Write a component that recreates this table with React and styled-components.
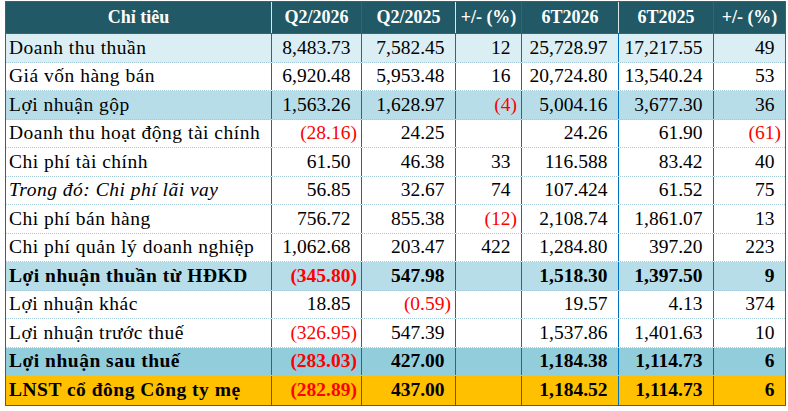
import React from "react";
import styled, { createGlobalStyle } from "styled-components";

const Global = createGlobalStyle`
  html, body { margin: 0; padding: 0; background: #ffffff; }
  body { font-family: "Liberation Serif", "Times New Roman", serif; }
`;

const COLS = "266px 90px 94px 66px 97px 95px 71px";
const BLUE = "#0070C0";

const Table = styled.div`
  margin: 1px 0 0 5px;
  width: fit-content;
  border: 1px solid ${BLUE};
`;

const HeadRow = styled.div`
  display: grid;
  grid-template-columns: ${COLS};
  height: 31px;
  background: #215967;
  border-bottom: 1px solid ${BLUE};
`;

const HeadCell = styled.div`
  display: flex;
  align-items: center;
  justify-content: center;
  color: #ffffff;
  font-weight: bold;
  font-size: 18px;
  border-right: 1px solid ${(p) => (p.$line === "blue" ? BLUE : "rgba(255,255,255,0.85)")};
  &:last-child { border-right: none; }
`;

const Row = styled.div`
  display: grid;
  grid-template-columns: ${COLS};
  box-sizing: border-box;
  height: 28.5px;
  background: ${(p) => p.$bg || "#ffffff"};
  border-bottom: 1px dotted #a3c8d8;
  font-size: 19.5px;
  font-weight: ${(p) => (p.$bold ? "bold" : "normal")};
  color: #000000;
  &:last-child { border-bottom: none; }
`;

const Label = styled.div`
  display: flex;
  align-items: center;
  padding-left: 3px;
  letter-spacing: 0.5px;
  white-space: nowrap;
  font-style: ${(p) => (p.$italic ? "italic" : "normal")};
  border-right: 1px solid ${BLUE};
`;

const Num = styled.div`
  display: flex;
  align-items: center;
  justify-content: flex-end;
  padding-right: 4px;
  white-space: nowrap;
  color: ${(p) => (p.$neg ? "#ff0000" : "#000000")};
  border-right: 1px solid ${BLUE};
  &:last-child { border-right: none; }
`;

const Pad = styled.span`
  visibility: hidden;
`;

const headers = [
  { t: "Chỉ tiêu", line: "white" },
  { t: "Q2/2026", line: "blue" },
  { t: "Q2/2025", line: "white" },
  { t: "+/- (%)", line: "blue" },
  { t: "6T2026", line: "white" },
  { t: "6T2025", line: "blue" },
  { t: "+/- (%)", line: "none" },
];

const rows = [
  { label: "Doanh thu thuần", bg: "#DAEEF3", v: ["8,483.73", "7,582.45", "12", "25,728.97", "17,217.55", "49"] },
  { label: "Giá vốn hàng bán", v: ["6,920.48", "5,953.48", "16", "20,724.80", "13,540.24", "53"] },
  { label: "Lợi nhuận gộp", bg: "#B7DEE8", v: ["1,563.26", "1,628.97", "(4)", "5,004.16", "3,677.30", "36"] },
  { label: "Doanh thu hoạt động tài chính", v: ["(28.16)", "24.25", "", "24.26", "61.90", "(61)"] },
  { label: "Chi phí tài chính", v: ["61.50", "46.38", "33", "116.588", "83.42", "40"] },
  { label: "Trong đó: Chi phí lãi vay", italic: true, v: ["56.85", "32.67", "74", "107.424", "61.52", "75"] },
  { label: "Chi phí bán hàng", v: ["756.72", "855.38", "(12)", "2,108.74", "1,861.07", "13"] },
  { label: "Chi phí quản lý doanh nghiệp", v: ["1,062.68", "203.47", "422", "1,284.80", "397.20", "223"] },
  { label: "Lợi nhuận thuần từ HĐKD", bold: true, bg: "#B7DEE8", v: ["(345.80)", "547.98", "", "1,518.30", "1,397.50", "9"] },
  { label: "Lợi nhuận khác", v: ["18.85", "(0.59)", "", "19.57", "4.13", "374"] },
  { label: "Lợi nhuận trước thuế", v: ["(326.95)", "547.39", "", "1,537.86", "1,401.63", "10"] },
  { label: "Lợi nhuận sau thuế", bold: true, bg: "#92CDDC", v: ["(283.03)", "427.00", "", "1,184.38", "1,114.73", "6"] },
  { label: "LNST cổ đông Công ty mẹ", bold: true, bg: "#FFC000", v: ["(282.89)", "437.00", "", "1,184.52", "1,114.73", "6"] },
];

export default function App() {
  return (
    <>
      <Global />
      <Table>
        <HeadRow>
          {headers.map((h, i) => (
            <HeadCell key={i} $line={h.line}>{h.t}</HeadCell>
          ))}
        </HeadRow>
        {rows.map((r, i) => (
          <Row key={i} $bg={r.bg} $bold={r.bold}>
            <Label $italic={r.italic}>{r.label}</Label>
            {r.v.map((v, j) => {
              const neg = v.startsWith("(");
              return (
                <Num key={j} $neg={neg}>
                  {v}
                  {v && !neg && <Pad>)</Pad>}
                </Num>
              );
            })}
          </Row>
        ))}
      </Table>
    </>
  );
}
